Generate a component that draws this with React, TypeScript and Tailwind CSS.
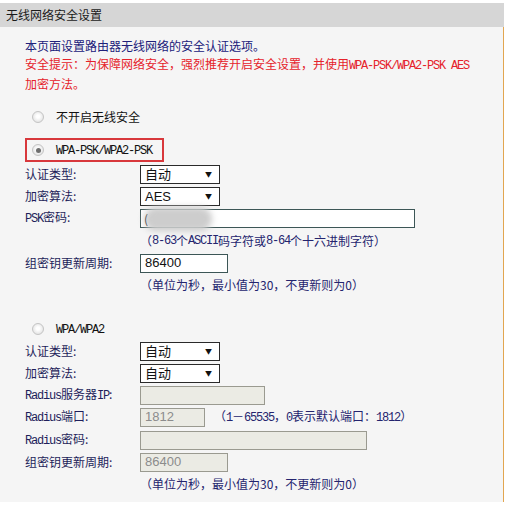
import React from "react";

const CJK = "font-['Noto_Sans_CJK_SC',sans-serif]";

function M({ children }: { children: React.ReactNode }) {
  return <span className="font-['Liberation_Mono',monospace] tracking-[-1.2px]">{children}</span>;
}

function Radio({ checked }: { checked?: boolean }) {
  return (
    <span className="flex h-[12px] w-[12px] items-center justify-center rounded-full border border-[#c4c4c4] bg-[radial-gradient(circle_at_50%_45%,#ffffff_20%,#d8d8d8_100%)]">
      {checked && <span className="h-[5px] w-[5px] rounded-full bg-[#6e6e6e]" />}
    </span>
  );
}

function Select({ value }: { value: string }) {
  return (
    <div className="flex h-[19px] w-[80px] items-center justify-between border border-[#2a2a2a] bg-white pl-[4px] pr-[7px]">
      <span className="font-['Liberation_Sans','Noto_Sans_CJK_SC',sans-serif] text-[13px] leading-none text-[#111]">{value}</span>
      <span className="text-[7px] leading-none text-[#111]">▼</span>
    </div>
  );
}

function Row({ label, children, cls = "" }: { label: React.ReactNode; children: React.ReactNode; cls?: string }) {
  return (
    <div className={`flex h-[22px] items-center ${cls}`}>
      <div className="w-[115px] text-[#1e1e5a]">{label}</div>
      <div className="flex items-center">{children}</div>
    </div>
  );
}

function Hint({ children, cls = "" }: { children: React.ReactNode; cls?: string }) {
  return (
    <div className={`flex h-[22px] items-center pl-[115px] text-[#24246e] ${cls}`}>{children}</div>
  );
}

export default function App() {
  return (
    <div className={`w-[512px] h-[510px] bg-white pt-[3px] ${CJK} text-[12px] leading-[18px]`}>
      <div className="w-[504px]">
        <div className="flex h-[24px] items-center bg-[#d6d6d6] pl-[6px] text-[12px] text-[#1a1a1a]">
          无线网络安全设置
        </div>
        <div className="h-[475px] border-r border-[#e2a650] bg-[#f5f5f5] pl-[25px] pt-[10px]">
          <div className="text-[#20207a]">本页面设置路由器无线网络的安全认证选项。</div>
          <div className="text-[#e5222a]">
            安全提示：为保障网络安全，强烈推荐开启安全设置，并使用<M>WPA-PSK/WPA2-PSK AES</M>
          </div>
          <div className="text-[#e5222a]">加密方法。</div>

          <div className="mt-[13px] flex h-[22px] items-center pl-[7px]">
            <Radio />
            <span className="ml-[12px] text-[#111]">不开启无线安全</span>
          </div>

          <div className="mt-[10px] flex h-[24px] w-[139px] items-center border-2 border-[#d8383c] pl-[5px]">
            <Radio checked />
            <span className="ml-[12px] text-[#111]"><M>WPA-PSK/WPA2-PSK</M></span>
          </div>

          <Row label="认证类型:" cls="mt-[1px]">
            <Select value="自动" />
          </Row>
          <Row label="加密算法:">
            <Select value="AES" />
          </Row>
          <Row label={<><M>PSK</M>密码:</>}>
            <div className="relative h-[19px] w-[275px] border border-[#3c5656] bg-white">
              <div className="absolute left-[3px] top-[-3px] h-[24px] w-[68px] rounded-full bg-[#cdcdcd] blur-[3px]" />
              <span className="absolute left-[3px] top-[1px] text-[12px] leading-[15px] text-[#555]">(</span>
            </div>
          </Row>
          <Hint cls="h-[23px]">
            （<M>8-63</M>个<M>ASCII</M>码字符或<M>8-64</M>个十六进制字符）
          </Hint>
          <Row label="组密钥更新周期:">
            <div className="flex h-[19px] w-[88px] items-center border border-[#3c5656] bg-white pl-[4px] font-['Liberation_Sans',sans-serif] text-[13px] text-[#111]">
              86400
            </div>
          </Row>
          <Hint cls="h-[20px]">（单位为秒，最小值为30，不更新则为0）</Hint>

          <div className="mt-[22px] flex h-[22px] items-center pl-[7px]">
            <Radio />
            <span className="ml-[12px] text-[#111]"><M>WPA/WPA2</M></span>
          </div>

          <Row label="认证类型:">
            <Select value="自动" />
          </Row>
          <Row label="加密算法:">
            <Select value="自动" />
          </Row>
          <Row label={<><M>Radius</M>服务器<M>IP</M>:</>}>
            <div className="h-[19px] w-[125px] border border-[#9a9a90] bg-[#ebebe4]" />
          </Row>
          <Row label={<><M>Radius</M>端口:</>}>
            <div className="flex h-[19px] w-[65px] items-center border border-[#9a9a90] bg-[#ebebe4] pl-[4px] font-['Liberation_Sans',sans-serif] text-[13px] text-[#8c8c8c]">
              1812
            </div>
            <span className="ml-[9px] text-[#24246e]">（<M>1</M>－<M>65535</M>，<M>0</M>表示默认端口：<M>1812</M>）</span>
          </Row>
          <Row label={<><M>Radius</M>密码:</>} cls="mt-[1px]">
            <div className="h-[19px] w-[227px] border border-[#9a9a90] bg-[#ebebe4]" />
          </Row>
          <Row label="组密钥更新周期:">
            <div className="flex h-[19px] w-[88px] items-center border border-[#9a9a90] bg-[#ebebe4] pl-[4px] font-['Liberation_Sans',sans-serif] text-[13px] text-[#8c8c8c]">
              86400
            </div>
          </Row>
          <Hint>（单位为秒，最小值为30，不更新则为0）</Hint>
        </div>
      </div>
    </div>
  );
}
